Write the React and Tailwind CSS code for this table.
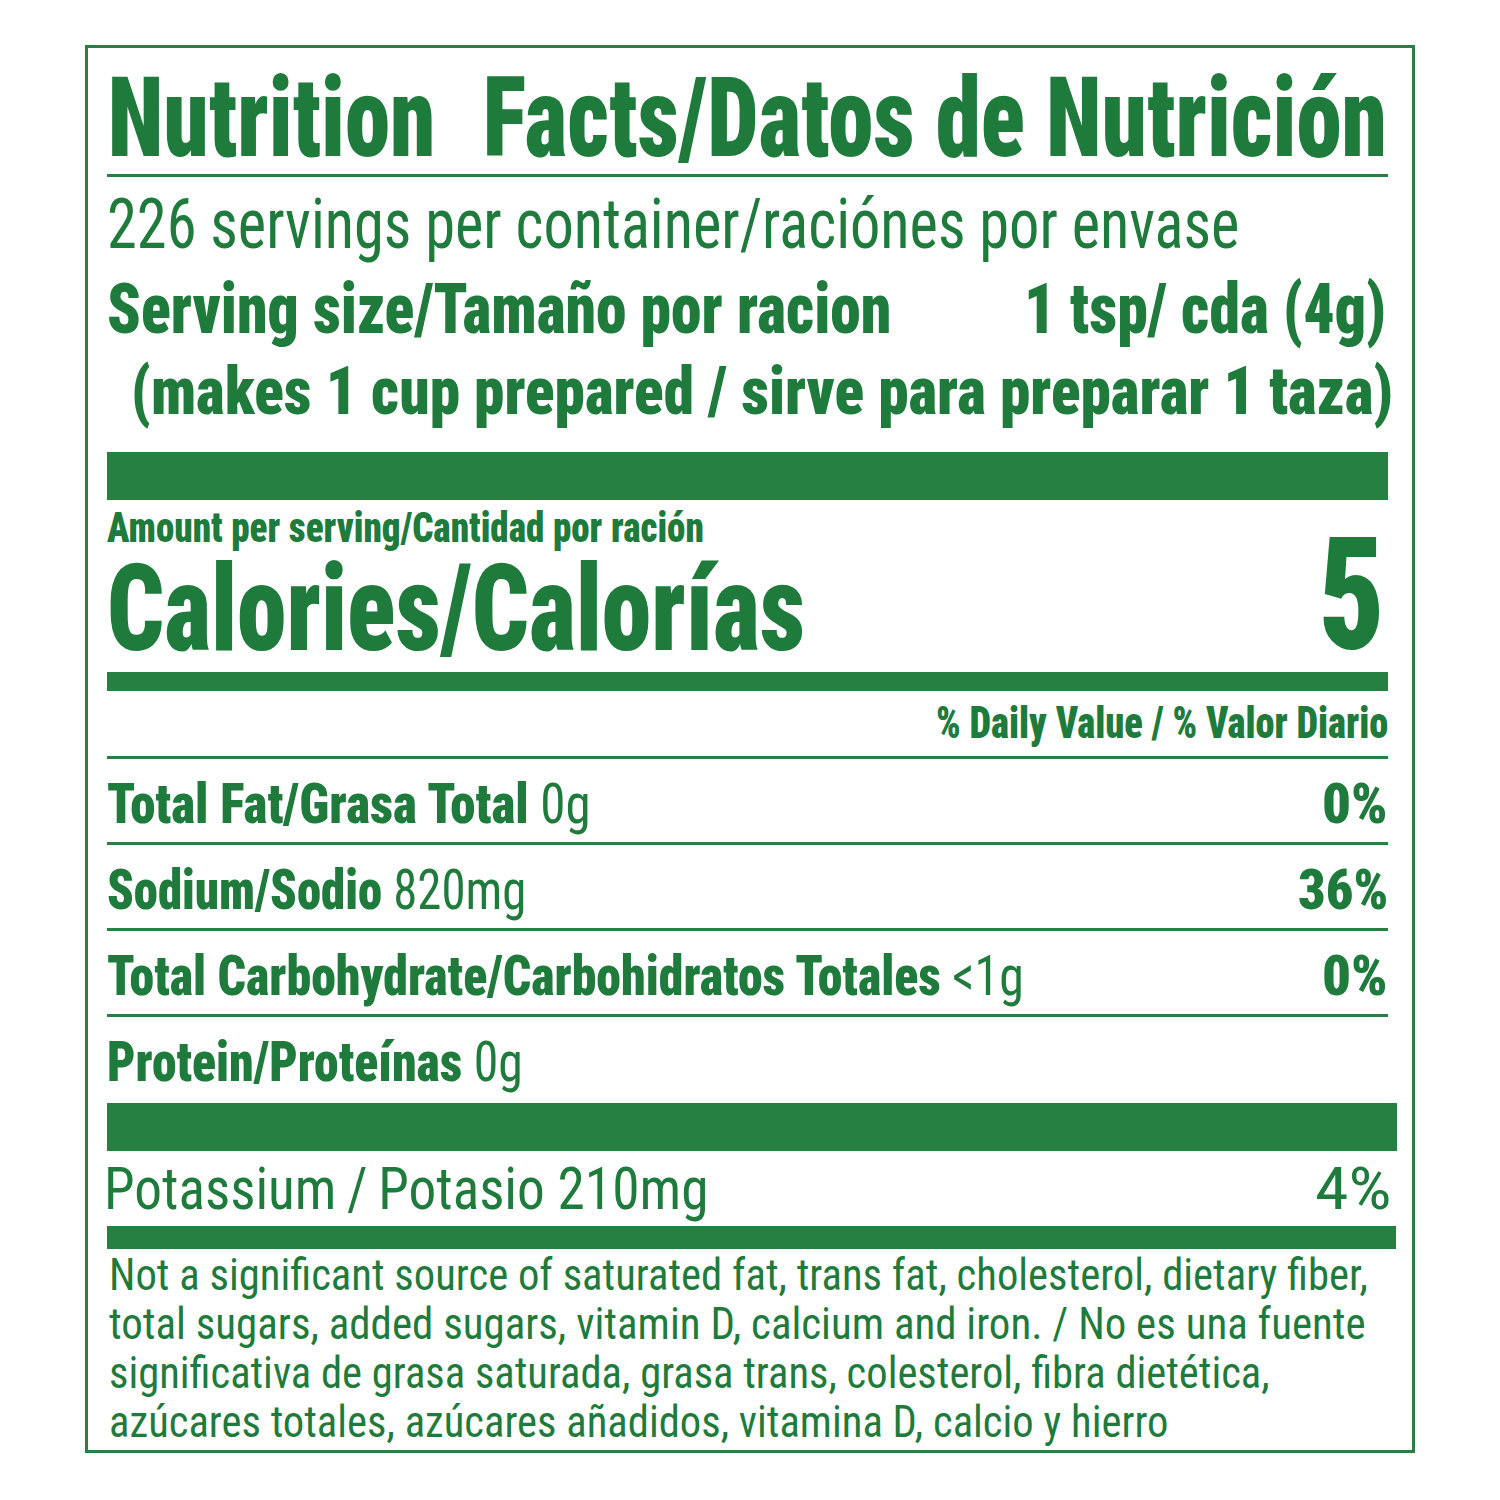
import React, { useLayoutEffect, useRef, useState } from 'react';

// Squeezes a line of text horizontally so it fills the width it has on the label
const Fit = ({ w, right = false, className = '', children }) => {
  const ref = useRef(null);
  const [scale, setScale] = useState(1);

  useLayoutEffect(() => {
    const measure = () => {
      if (ref.current && ref.current.offsetWidth) {
        setScale(w / ref.current.offsetWidth);
      }
    };
    measure();
    if (document.fonts && document.fonts.ready) document.fonts.ready.then(measure);
  }, [w]);

  return (
    <span
      ref={ref}
      className={`block w-max whitespace-nowrap ${right ? 'origin-right ml-auto' : 'origin-left'} ${className}`}
      style={{ transform: `scaleX(${scale})` }}
    >
      {children}
    </span>
  );
};

const rows = [
  { label: 'Total Fat/Grasa Total', amount: '0g', dv: '0%', w: 484, dw: 66 },
  { label: 'Sodium/Sodio', amount: '820mg', dv: '36%', w: 419, dw: 90 },
  { label: 'Total Carbohydrate/Carbohidratos Totales', amount: '<1g', dv: '0%', w: 917, dw: 66 },
  { label: 'Protein/Proteínas', amount: '0g', dv: '', w: 416, last: true },
];

const footnote = [
  { text: 'Not a significant source of saturated fat, trans fat, cholesterol, dietary fiber,', w: 1259 },
  { text: 'total sugars, added sugars, vitamin D, calcium and iron. / No es una fuente', w: 1257 },
  { text: 'significativa de grasa saturada, grasa trans, colesterol, fibra dietética,', w: 1161 },
  { text: 'azúcares totales, azúcares añadidos, vitamina D, calcio y hierro', w: 1059 },
];

const NutrientRow = ({ label, amount, dv, w, dw, last }) => (
  <div
    className={`flex justify-between items-start pt-[17px] pb-[10px] text-[56px] leading-none ${
      last ? '' : 'border-b-[3px] border-[#268042]'
    }`}
  >
    <div className="min-w-0 flex-1 h-[56px]">
      <Fit w={w}>
        <span className="font-black">{label}</span> <span className="font-normal">{amount}</span>
      </Fit>
    </div>
    {dv && (
      <div className="shrink-0 h-[56px] font-black">
        <Fit w={dw} right>
          {dv}
        </Fit>
      </div>
    )}
  </div>
);

export default function App() {
  return (
    <div className="min-h-[1500px] bg-white pt-[45px] pl-[85px] [font-family:Roboto,sans-serif] font-stretch-condensed text-[#1e7b3c]">
      <div className="w-[1330px] h-[1408px] border-[3px] border-[#268042] pl-[19px] pr-[24px]">
        {/* Title */}
        <div className="mt-[14px] h-[115px] text-[112px] leading-none font-black border-b-[3px] border-[#268042]">
          <Fit w={1280} className="pl-[1px]">
            <span>Nutrition</span>
            <span className="ml-[58px]">Facts/Datos de Nutrición</span>
          </Fit>
        </div>

        {/* Servings */}
        <div className="mt-[12px] h-[70px] text-[70px] leading-none font-normal">
          <Fit w={1132}>226 servings per container/raciónes por envase</Fit>
        </div>
        <div className="mt-[15px] h-[70px] flex justify-between text-[70px] leading-none font-black">
          <div className="min-w-0 flex-1">
            <Fit w={784}>Serving size/Tamaño por racion</Fit>
          </div>
          <div className="shrink-0 pr-[2px]">
            <Fit w={362} right>
              1 tsp/ cda (4g)
            </Fit>
          </div>
        </div>
        <div className="mt-[15px] h-[66px] pl-[24px] text-[66px] leading-none font-black">
          <Fit w={1262}>(makes 1 cup prepared / sirve para preparar 1 taza)</Fit>
        </div>

        <div className="mt-[27px] h-[48px] bg-[#268042]" />

        {/* Calories */}
        <div className="mt-[7px] flex justify-between items-end">
          <div className="min-w-0 flex-1 flex flex-col">
            <div className="h-[42px] text-[42px] leading-none font-black">
              <Fit w={597}>Amount per serving/Cantidad por ración</Fit>
            </div>
            <div className="h-[120px] text-[120px] leading-none font-black">
              <Fit w={698}>Calories/Calorías</Fit>
            </div>
          </div>
          <div className="shrink-0 text-[156px] leading-none font-black mb-[-4px] pr-[3px]">
            <Fit w={66} right>
              5
            </Fit>
          </div>
        </div>

        <div className="mt-[3px] h-[19px] bg-[#268042]" />

        <div className="mt-[10px] h-[44px] pb-[11px] box-content text-[44px] leading-none font-black border-b-[3px] border-[#268042]">
          <Fit w={452} right>
            % Daily Value / % Valor Diario
          </Fit>
        </div>

        {rows.map((r) => (
          <NutrientRow key={r.label} {...r} />
        ))}

        <div className="mt-[3px] mr-[-9px] h-[48px] bg-[#268042]" />

        <div className="mt-[8px] h-[60px] mr-[-4px] flex justify-between text-[60px] leading-none font-normal">
          <div className="min-w-0 flex-1 ml-[-3px]">
            <Fit w={604}>Potassium&thinsp;/&thinsp;Potasio 210mg</Fit>
          </div>
          <div className="shrink-0">
            <Fit w={77} right>
              4%
            </Fit>
          </div>
        </div>

        <div className="mt-[7px] mr-[-8px] h-[23px] bg-[#268042]" />

        <div className="mt-[1px] pl-[2px] text-[45px] leading-[49px] font-normal">
          {footnote.map((line) => (
            <Fit key={line.text} w={line.w}>
              {line.text}
            </Fit>
          ))}
        </div>
      </div>
    </div>
  );
}
